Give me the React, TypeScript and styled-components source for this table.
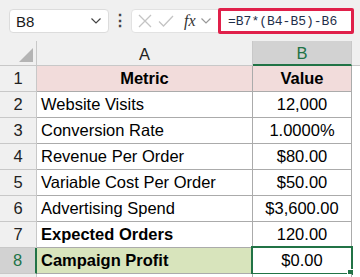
import React from 'react';
import styled, {createGlobalStyle} from "styled-components";

const GlobalStyle = createGlobalStyle`
  html, body {
    margin: 0;
    padding: 0;
    background: #ffffff;
  }
  body {
    font-family: "Liberation Sans", Arial, sans-serif;
  }
`

type RowType = {
    label: string
    value: string
    bold?: boolean
    boldValue?: boolean
    fill?: string
}

const rows: RowType[] = [
    {label: 'Metric', value: 'Value', bold: true, boldValue: true, fill: '#f2dcdb'},
    {label: 'Website Visits', value: '12,000'},
    {label: 'Conversion Rate', value: '1.0000%'},
    {label: 'Revenue Per Order', value: '$80.00'},
    {label: 'Variable Cost Per Order', value: '$50.00'},
    {label: 'Advertising Spend', value: '$3,600.00'},
    {label: 'Expected Orders', value: '120.00', bold: true},
    {label: 'Campaign Profit', value: '$0.00', bold: true, fill: '#d8e4bc'},
]

const GREEN = '#217346'

export default function App() {
    return (
        <Page>
            <GlobalStyle/>
            <Toolbar>
                <NameBox>
                    <span>B8</span>
                    <Chevron/>
                </NameBox>
                <Dots>⋮</Dots>
                <ActionBox>
                    <svg width="14" height="14" viewBox="0 0 14 14">
                        <path d="M1 1 L13 13 M13 1 L1 13" stroke="#c4c4c4" strokeWidth="1.3" fill="none"/>
                    </svg>
                    <svg width="16" height="14" viewBox="0 0 16 14">
                        <path d="M1 7.5 L5.5 12 L15 2" stroke="#c4c4c4" strokeWidth="1.3" fill="none"/>
                    </svg>
                    <Fx>fx</Fx>
                    <Chevron/>
                </ActionBox>
                <FormulaBox>=B7*(B4-B5)-B6</FormulaBox>
            </Toolbar>
            <Sheet>
                <Corner>
                    <svg width="14" height="14" viewBox="0 0 14 14">
                        <path d="M14 0 L14 14 L0 14 Z" fill="#b4b4b4"/>
                    </svg>
                </Corner>
                <ColHeader>A</ColHeader>
                <ColHeader $active>B</ColHeader>
                <Filler $header/>
                {rows.map((r, i) => {
                    const active = i === rows.length - 1
                    return (
                        <React.Fragment key={i}>
                            <RowHeader $active={active}>{i + 1}</RowHeader>
                            <Cell $bold={r.bold} $fill={r.fill} $align={i === 0 ? 'center' : 'left'}>{r.label}</Cell>
                            <Cell $bold={r.boldValue} $fill={active ? undefined : r.fill} $align="center" $selected={active}>
                                {r.value}
                            </Cell>
                            <Filler/>
                        </React.Fragment>
                    )
                })}
                <RowHeader/>
                <Cell/>
                <Cell/>
                <Filler/>
            </Sheet>
        </Page>
    );
}

const Chevron = () => (
    <svg width="10" height="6" viewBox="0 0 10 6">
        <path d="M0.5 0.5 L5 5 L9.5 0.5" stroke="#555" strokeWidth="1.2" fill="none"/>
    </svg>
)

const Page = styled.div`
  width: 360px;
  height: 277px;
  overflow: hidden;
  background: #ffffff;
`

const Toolbar = styled.div`
  height: 41px;
  box-sizing: border-box;
  background: #f0f0f0;
  display: flex;
  align-items: flex-start;
  padding: 8px 6px 0 9px;
`

const NameBox = styled.div`
  width: 100px;
  height: 24px;
  margin-top: 1px;
  box-sizing: border-box;
  background: #ffffff;
  border: 1px solid #dcdcdc;
  border-radius: 4px;
  display: flex;
  align-items: center;
  justify-content: space-between;
  padding: 0 7px 0 6px;
  font-size: 15px;
  color: #1a1a1a;

  svg path {
    stroke: #444;
  }
`

const Dots = styled.div`
  width: 22px;
  text-align: center;
  font-size: 16px;
  font-weight: bold;
  line-height: 26px;
  color: #444;
`

const ActionBox = styled.div`
  width: 96px;
  height: 24px;
  margin-top: 1px;
  box-sizing: border-box;
  background: #ffffff;
  border: 1px solid #e2e2e2;
  border-radius: 4px;
  display: flex;
  align-items: center;
  gap: 6px;
  padding-left: 6px;

  svg:last-child path {
    stroke: #999;
  }
`

const Fx = styled.span`
  font-family: "Liberation Serif", "Times New Roman", serif;
  font-style: italic;
  font-size: 16px;
  color: #333;
  margin-left: 4px;
  margin-right: -1px;
`

const FormulaBox = styled.div`
  margin-left: -9px;
  flex: 1;
  height: 26px;
  box-sizing: border-box;
  background: #ffffff;
  border: 3px solid #e0204a;
  border-radius: 2px;
  display: flex;
  align-items: center;
  padding-left: 7px;
  font-family: "Liberation Mono", "Courier New", monospace;
  font-size: 13px;
  color: #1f2f4a;
  position: relative;
`

const Sheet = styled.div`
  display: grid;
  grid-template-columns: 37px 216px 99px 1fr;
  grid-template-rows: 25px repeat(9, 26px);
  font-size: 16.5px;
  color: #000;
`

const Corner = styled.div`
  background: #f0f0f0;
  border-right: 1px solid #c8c8c8;
  border-bottom: 1px solid #c8c8c8;
  display: flex;
  align-items: flex-end;
  justify-content: flex-end;
  padding: 0 3px 3px 0;
`

const ColHeader = styled.div<{ $active?: boolean }>`
  background: ${p => p.$active ? '#d2d2d2' : '#f0f0f0'};
  color: ${p => p.$active ? GREEN : '#222'};
  border-right: 1px solid #c8c8c8;
  border-bottom: ${p => p.$active ? `2px solid ${GREEN}` : '1px solid #c8c8c8'};
  display: flex;
  align-items: center;
  justify-content: center;
  padding-top: 2px;
  box-sizing: border-box;
`

const RowHeader = styled.div<{ $active?: boolean }>`
  background: ${p => p.$active ? '#d2d2d2' : '#f0f0f0'};
  color: ${p => p.$active ? GREEN : '#222'};
  border-right: ${p => p.$active ? `2px solid ${GREEN}` : '1px solid #c8c8c8'};
  border-bottom: 1px solid #c8c8c8;
  display: flex;
  align-items: center;
  justify-content: center;
  box-sizing: border-box;
`

const Cell = styled.div<{ $bold?: boolean, $fill?: string, $align?: 'left' | 'center', $selected?: boolean }>`
  position: relative;
  background: ${p => p.$fill || '#ffffff'};
  font-weight: ${p => p.$bold ? 700 : 400};
  border-right: 1px solid #ababab;
  border-bottom: 1px solid #ababab;
  display: flex;
  align-items: center;
  justify-content: ${p => p.$align === 'center' ? 'center' : 'flex-start'};
  padding-left: ${p => p.$align === 'center' ? '0' : '4px'};
  white-space: nowrap;
  box-sizing: border-box;

  ${p => p.$selected && `
    &::before {
      content: '';
      position: absolute;
      left: -2px;
      top: -2px;
      right: -2px;
      bottom: -2px;
      border: 2px solid ${GREEN};
    }
    &::after {
      content: '';
      position: absolute;
      right: -3px;
      bottom: -3px;
      width: 5px;
      height: 5px;
      background: ${GREEN};
      border: 1px solid #fff;
    }
  `}
`

const Filler = styled.div<{ $header?: boolean }>`
  background: ${p => p.$header ? '#f0f0f0' : '#ffffff'};
  border-bottom: ${p => p.$header ? '1px solid #c8c8c8' : 'none'};
`
